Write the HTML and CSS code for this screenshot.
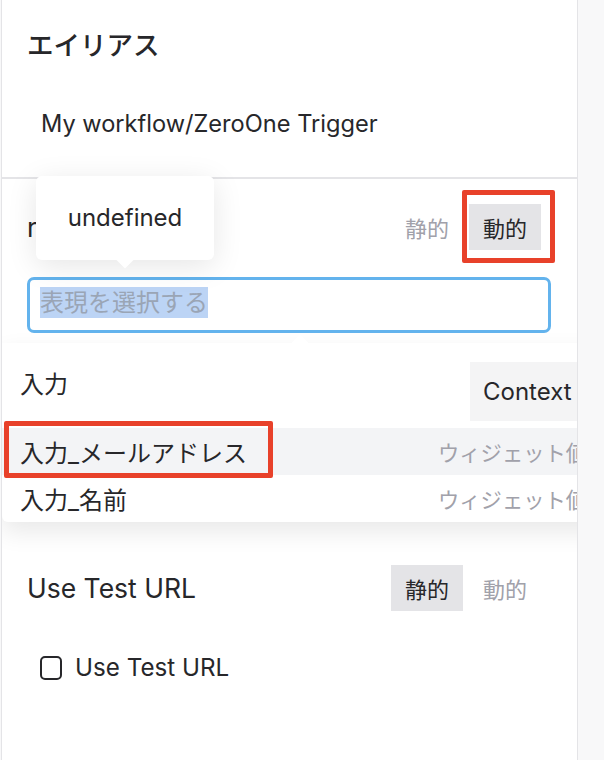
FILE: index.html
```html
<!DOCTYPE html>
<html lang="ja">
<head>
    <meta charset="UTF-8">
    <meta name="viewport" content="width=device-width, initial-scale=1.0">
    <title>ZeroOne Trigger</title>

    <link rel="stylesheet" href="styles.css">
</head>
<body>

    <div class="panel">
        <!-- Alias -->
        <div class="field alias">
            <div class="field-title">エイリアス</div>
            <div class="alias-value">My workflow/ZeroOne Trigger</div>
        </div>

        <!-- Recipient (dynamic) -->
        <div class="field recipient">
            <div class="field-head">
                <span class="field-label">recipient</span>
                <div class="toggle">
                    <button>静的</button>
                    <button class="active">動的</button>
                </div>
            </div>
            <div class="expr-input focused">
                <span class="selected">表現を選択する</span>
            </div>
        </div>

        <!-- Use Test URL -->
        <div class="field test-url">
            <div class="field-head">
                <span class="field-label">Use Test URL</span>
                <div class="toggle">
                    <button class="active">静的</button>
                    <button>動的</button>
                </div>
            </div>
            <label class="check">
                <input type="checkbox">
                <span>Use Test URL</span>
            </label>
        </div>

        <div class="tooltip">undefined</div>

        <div class="dropdown">
            <div class="option group">
                <span class="option-name">入力</span>
                <span class="tag">Context</span>
            </div>
            <div class="option hover">
                <span class="option-name">入力_メールアドレス</span>
                <span class="option-type">ウィジェット値</span>
            </div>
            <div class="option">
                <span class="option-name">入力_名前</span>
                <span class="option-type">ウィジェット値</span>
            </div>
        </div>

        <!-- annotations -->
        <div class="mark mark-toggle"></div>
        <div class="mark mark-option"></div>
    </div>

</body>
</html>
```

FILE: styles.css
```css
/* General */
body {
    margin: 0;
    background: #f8f8f9;
    font-family: Inter, "Noto Sans CJK JP", sans-serif;
    color: #27272a;
}

.panel {
    position: relative;
    width: 575px;
    height: 760px;
    margin-left: 1px;
    background: white;
    border-left: 1px solid #e4e4e7;
    border-right: 1px solid #e4e4e7;
    overflow: hidden;
}

/* Fields */
.field {
    padding: 0 26px 0 25px;
}

.alias {
    padding-top: 30px;
    height: 147px;
    border-bottom: 2px solid #e4e4e7;
}

.field-title {
    font-size: 26.5px;
    font-weight: 500;
    line-height: 30px;
}

.alias-value {
    margin-top: 49px;
    padding-left: 14px;
    font-size: 23.6px;
    line-height: 30px;
}

.field-head {
    display: flex;
    justify-content: space-between;
    align-items: center;
    height: 46px;
}

.field-label {
    font-size: 26.5px;
}

.toggle {
    display: flex;
    gap: 6px;
    margin-right: 10px;
}

.toggle button {
    width: 72px;
    height: 46px;
    border: none;
    background: none;
    font-family: inherit;
    font-size: 22px;
    color: #a1a1aa;
    padding: 0;
}

.toggle button.active {
    background: #e4e4e7;
    color: #27272a;
}

.recipient {
    padding-top: 25px;
    height: 360px;
}

.expr-input {
    margin-top: 27px;
    height: 50px;
    border: 3px solid #63b3ed;
    border-radius: 7px;
    padding: 7px 10px 0;
    box-sizing: content-box;
    height: 43px;
}

.selected {
    background: #bcd4f5;
    color: #9aa5b5;
    font-size: 24px;
    line-height: 31px;
    display: inline-block;
}

.test-url .field-head {
    height: 47px;
}

.check {
    display: flex;
    align-items: center;
    gap: 13px;
    margin-top: 42px;
    padding-left: 13px;
    font-size: 24.2px;
}

.check input {
    appearance: none;
    width: 22px;
    height: 24px;
    margin: 0;
    border: 2px solid #27272a;
    border-radius: 5px;
}

/* Tooltip */
.tooltip {
    position: absolute;
    left: 34px;
    top: 176px;
    width: 178px;
    height: 84px;
    background: white;
    border-radius: 6px;
    box-shadow: 0 6px 30px rgba(0, 0, 0, 0.10);
    font-size: 24px;
    line-height: 84px;
    text-align: center;
}

.tooltip::after {
    content: "";
    position: absolute;
    left: 83px;
    bottom: -6px;
    width: 12px;
    height: 12px;
    background: white;
    transform: rotate(45deg);
}

/* Expression dropdown */
.dropdown {
    position: absolute;
    left: 0;
    top: 343px;
    width: 700px;
    background: white;
    border-radius: 0 0 6px 6px;
    box-shadow: 0 10px 24px rgba(0, 0, 0, 0.09);
    font-size: 24px;
}

.dropdown::before {
    content: "";
    position: absolute;
    left: 292px;
    top: -6px;
    width: 12px;
    height: 12px;
    background: white;
    transform: rotate(45deg);
}

.option {
    display: grid;
    grid-template-columns: 418px auto;
    align-items: center;
    height: 47px;
    padding-left: 18px;
}

.option.group {
    grid-template-columns: 450px auto;
    align-items: start;
    height: 85px;
}

.option.group .option-name {
    margin-top: 27px;
    line-height: 30px;
}

.option.hover {
    background: #f3f4f6;
}

.tag {
    margin-top: 19px;
    height: 59px;
    line-height: 59px;
    padding: 0 13px;
    background: #f4f4f5;
    justify-self: start;
}

.option-type {
    font-size: 21.3px;
    color: #a1a1aa;
}

/* Annotation marks */
.mark {
    position: absolute;
    border: 5px solid #e8412a;
    border-radius: 2px;
}

.mark-toggle {
    left: 460px;
    top: 190px;
    width: 83px;
    height: 63px;
}

.mark-option {
    left: 2px;
    top: 421px;
    width: 259px;
    height: 47px;
}
```
